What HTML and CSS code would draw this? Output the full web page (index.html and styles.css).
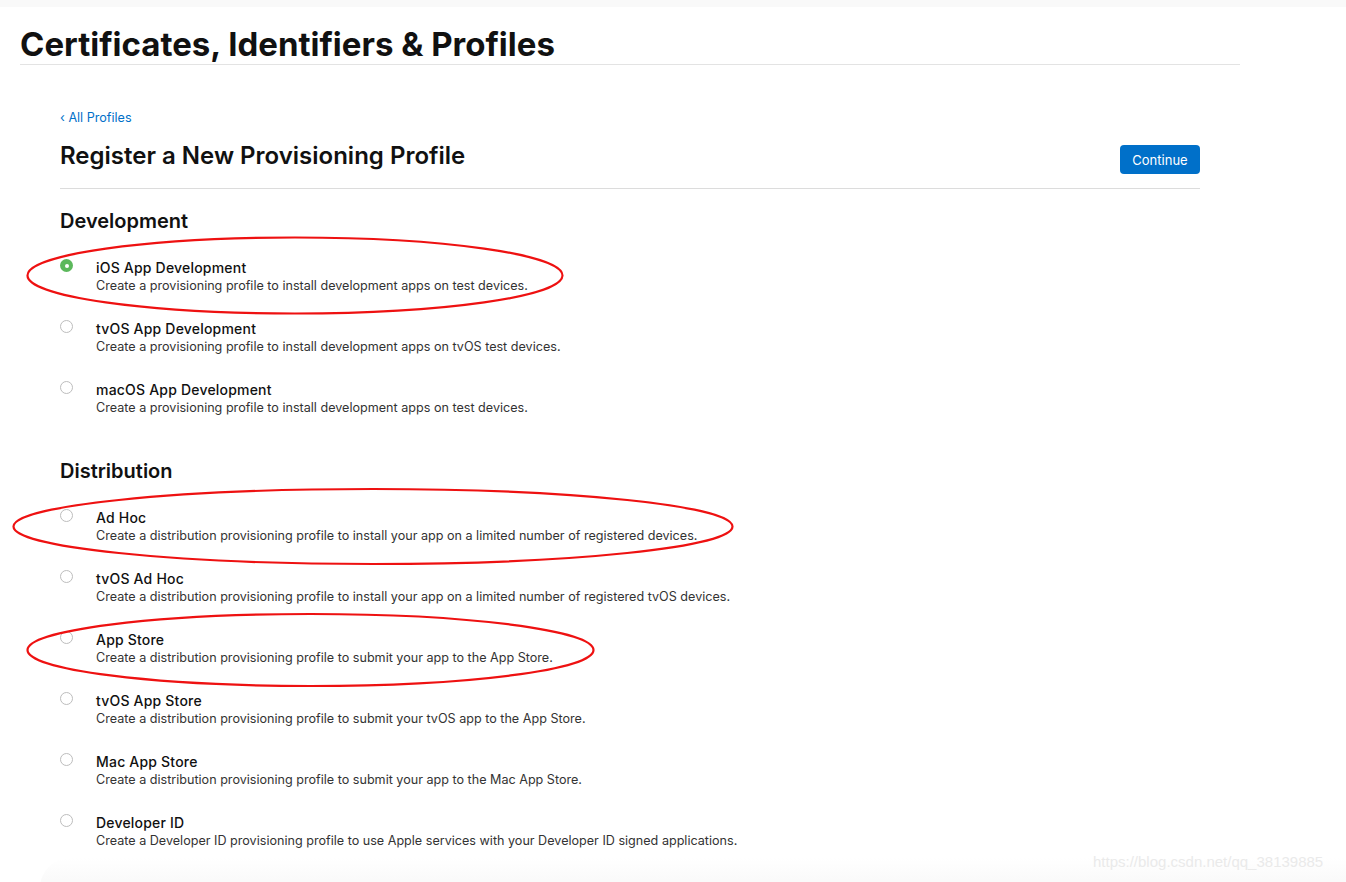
FILE: index.html
```html
<!DOCTYPE html>
<html lang="en">
<head>
<meta charset="utf-8">
<title>Certificates, Identifiers &amp; Profiles</title>
<link rel="stylesheet" href="styles.css">
</head>
<body>
<div class="topbar"></div>
<header class="page-header">
  <h1 class="page-title">Certificates, Identifiers &amp; Profiles</h1>
</header>
<main class="content">
  <a class="back-link" href="#">&#8249; All Profiles</a>
  <div class="title-row">
    <h2 class="section-title">Register a New Provisioning Profile</h2>
    <button class="btn-continue">Continue</button>
  </div>

  <section class="group">
    <h3 class="group-title">Development</h3>
    <ul class="options">
      <li class="option">
        <span class="radio checked"></span>
        <div class="option-text">
          <div class="option-name">iOS App Development</div>
          <div class="option-desc">Create a provisioning profile to install development apps on test devices.</div>
        </div>
      </li>
      <li class="option">
        <span class="radio"></span>
        <div class="option-text">
          <div class="option-name">tvOS App Development</div>
          <div class="option-desc">Create a provisioning profile to install development apps on tvOS test devices.</div>
        </div>
      </li>
      <li class="option">
        <span class="radio"></span>
        <div class="option-text">
          <div class="option-name">macOS App Development</div>
          <div class="option-desc">Create a provisioning profile to install development apps on test devices.</div>
        </div>
      </li>
    </ul>
  </section>

  <section class="group group-dist">
    <h3 class="group-title">Distribution</h3>
    <ul class="options">
      <li class="option">
        <span class="radio"></span>
        <div class="option-text">
          <div class="option-name">Ad Hoc</div>
          <div class="option-desc">Create a distribution provisioning profile to install your app on a limited number of registered devices.</div>
        </div>
      </li>
      <li class="option">
        <span class="radio"></span>
        <div class="option-text">
          <div class="option-name">tvOS Ad Hoc</div>
          <div class="option-desc">Create a distribution provisioning profile to install your app on a limited number of registered tvOS devices.</div>
        </div>
      </li>
      <li class="option">
        <span class="radio"></span>
        <div class="option-text">
          <div class="option-name">App Store</div>
          <div class="option-desc">Create a distribution provisioning profile to submit your app to the App Store.</div>
        </div>
      </li>
      <li class="option">
        <span class="radio"></span>
        <div class="option-text">
          <div class="option-name">tvOS App Store</div>
          <div class="option-desc">Create a distribution provisioning profile to submit your tvOS app to the App Store.</div>
        </div>
      </li>
      <li class="option">
        <span class="radio"></span>
        <div class="option-text">
          <div class="option-name">Mac App Store</div>
          <div class="option-desc">Create a distribution provisioning profile to submit your app to the Mac App Store.</div>
        </div>
      </li>
      <li class="option">
        <span class="radio"></span>
        <div class="option-text">
          <div class="option-name">Developer ID</div>
          <div class="option-desc">Create a Developer ID provisioning profile to use Apple services with your Developer ID signed applications.</div>
        </div>
      </li>
    </ul>
  </section>
</main>
<div class="footer-shade"></div>
<div class="watermark">https://blog.csdn.net/qq_38139885</div>

<svg class="annotations" width="1346" height="882" viewBox="0 0 1346 882" aria-hidden="true">
  <ellipse cx="295" cy="275.5" rx="267.5" ry="38" />
  <ellipse cx="373" cy="526.5" rx="359.5" ry="37.5" />
  <ellipse cx="310.5" cy="650" rx="283" ry="36" />
</svg>
</body>
</html>
```

FILE: styles.css
```css
* {
  box-sizing: border-box;
}

html, body {
  margin: 0;
  padding: 0;
  background: #ffffff;
}

body {
  font-family: Inter, "Helvetica Neue", "Liberation Sans", Arial, sans-serif;
  color: #1d1d1f;
  width: 1346px;
  height: 882px;
  overflow: hidden;
  position: relative;
}

.topbar {
  height: 7px;
  background: #f9f9f9;
}

.page-header {
  margin: 0 106px 0 20px;
  padding-top: 17px;
  border-bottom: 1px solid #e3e3e3;
}

.page-title {
  margin: 0;
  font-size: 33px;
  line-height: 40px;
  font-weight: 700;
  color: #111111;
}

.content {
  margin-left: 60px;
  width: 1140px;
  padding-top: 45px;
}

.back-link {
  display: block;
  font-size: 12.6px;
  line-height: 16px;
  color: #0070c9;
  text-decoration: none;
}

.title-row {
  display: flex;
  align-items: flex-start;
  justify-content: space-between;
  margin-top: 15px;
  padding-bottom: 14px;
  border-bottom: 1px solid #dcdcdc;
}

.section-title {
  margin: 0;
  font-size: 24px;
  line-height: 30px;
  font-weight: 600;
  color: #111111;
}

.btn-continue {
  width: 80px;
  height: 29px;
  margin-top: 4px;
  border: none;
  border-radius: 4px;
  background: #0070c9;
  color: #ffffff;
  font-family: inherit;
  font-size: 13px;
  padding: 0;
}

.group {
  margin-top: 20px;
}

.group-dist {
  margin-top: 42px;
}

.group-title {
  margin: 0;
  font-size: 20px;
  line-height: 24px;
  font-weight: 600;
  color: #111111;
}

.options {
  list-style: none;
  margin: 26px 0 0 0;
  padding: 0;
  display: flex;
  flex-direction: column;
  gap: 25px;
}

.option {
  display: flex;
  align-items: flex-start;
}

.radio {
  flex: none;
  width: 13px;
  height: 13px;
  margin: 0 23px 0 0;
  border-radius: 50%;
  border: 1px solid #bdbdbd;
  background: #ffffff;
  position: relative;
}

.radio.checked {
  border: none;
  background: #5cb85c;
}

.radio.checked::after {
  content: "";
  position: absolute;
  left: 4.5px;
  top: 4.5px;
  width: 4px;
  height: 4px;
  border-radius: 50%;
  background: #ffffff;
}

.option-name {
  font-size: 14px;
  line-height: 17px;
  font-weight: 500;
  letter-spacing: 0.2px;
  color: #111111;
}

.option-desc {
  font-size: 12.6px;
  line-height: 19px;
  color: #333333;
}

.footer-shade {
  position: absolute;
  left: 40px;
  right: 0;
  top: 858px;
  height: 40px;
  border-radius: 30px 0 0 0;
  background: linear-gradient(to bottom, #ffffff, #f6f6f6);
}

.watermark {
  position: absolute;
  left: 1093px;
  top: 853px;
  font-family: "Liberation Sans", Arial, sans-serif;
  font-size: 15px;
  color: #eaeaea;
}

.annotations {
  position: absolute;
  left: 0;
  top: 0;
  pointer-events: none;
}

.annotations ellipse {
  fill: none;
  stroke: #ee1111;
  stroke-width: 2.2;
}
```
